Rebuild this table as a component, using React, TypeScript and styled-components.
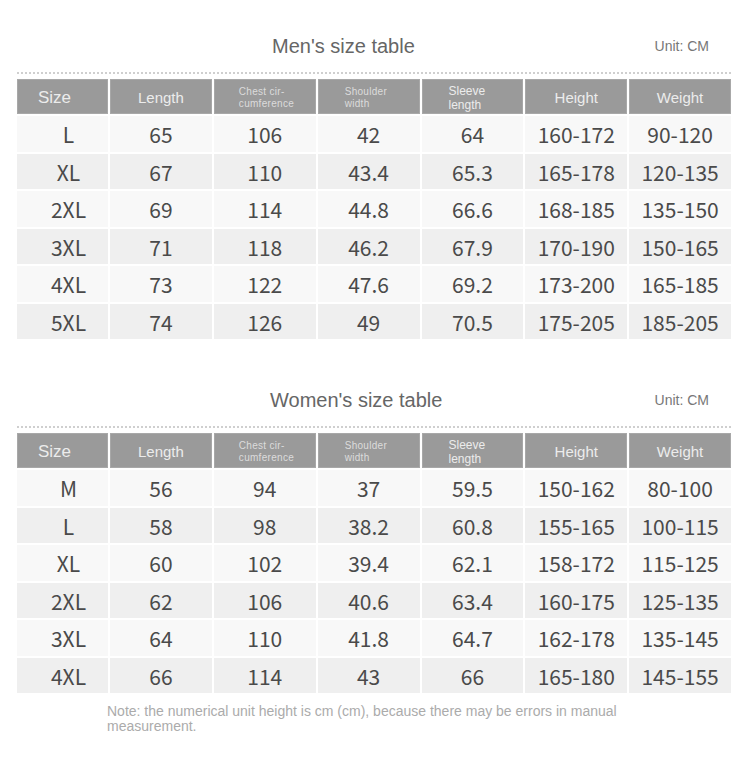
import styled, {createGlobalStyle} from "styled-components";

const GlobalStyle = createGlobalStyle`
    body {
        margin: 0;
        background: #ffffff;
        font-family: "Liberation Sans", Arial, sans-serif;
    }
`;

const Page = styled.div`
    width: 750px;
    padding-top: 26px;
    display: flex;
    flex-direction: column;
    gap: 41px;
`;

const Section = styled.section`
    display: flex;
    flex-direction: column;
    margin: 0 19px 0 17px;
`;

const TitleRow = styled.div`
    height: 40px;
    display: flex;
    align-items: center;
    padding: 0 22px 0 ${(props: { $indent: number }) => props.$indent}px;
`;

const Title = styled.h2`
    margin: 0;
    font-size: 20px;
    font-weight: normal;
    color: #666666;
`;

const Unit = styled.span`
    margin-left: auto;
    font-size: 14px;
    color: #777777;
`;

// the row of little dots right above the header
const Divider = styled.div`
    height: 0;
    border-top: 2px dotted #cfcfcf;
    margin: 6px 0 5px;
`;

const Grid = styled.div`
    display: grid;
    grid-template-columns: 91px repeat(6, 1fr);
    grid-template-rows: 35px;
    grid-auto-rows: 35.5px;
    gap: 2px;
    background: #ffffff;
`;

const HeadCell = styled.div<{ $small?: boolean; $pad?: number; $size?: number }>`
    background: #9a9a9a;
    box-shadow: inset 0 0 0 1px #a8a8a8;
    display: flex;
    flex-direction: column;
    justify-content: center;
    align-items: ${(props) => (props.$pad !== undefined ? "flex-start" : "center")};
    padding-left: ${(props) => props.$pad ?? 0}px;
    padding-top: 2px;
    color: ${(props) => (props.$small ? "#dcdcdc" : "#ececec")};
    font-size: ${(props) => props.$size ?? 15}px;
    line-height: ${(props) => (props.$size && props.$size < 14 ? `${props.$size + 2}px` : "normal")};
    letter-spacing: ${(props) => (props.$small ? "0.3px" : "0")};
`;

const Cell = styled.div<{ $odd: boolean; $first?: boolean }>`
    background: ${(props) => (props.$odd ? "#efefef" : "#f8f8f8")};
    display: flex;
    align-items: center;
    justify-content: center;
    padding-left: ${(props) => (props.$first ? "12px" : "0")};
    padding-top: 1px;
    font-family: "Noto Sans CJK SC", "Noto Sans", sans-serif;
    font-size: 21px;
    color: #4a4a4a;
`;

const Note = styled.p`
    margin: 11px 0 0 107px;
    width: 540px;
    font-size: 14px;
    line-height: 15px;
    color: #ababab;
`;

const menRows = [
    ["L", "65", "106", "42", "64", "160-172", "90-120"],
    ["XL", "67", "110", "43.4", "65.3", "165-178", "120-135"],
    ["2XL", "69", "114", "44.8", "66.6", "168-185", "135-150"],
    ["3XL", "71", "118", "46.2", "67.9", "170-190", "150-165"],
    ["4XL", "73", "122", "47.6", "69.2", "173-200", "165-185"],
    ["5XL", "74", "126", "49", "70.5", "175-205", "185-205"],
];

const womenRows = [
    ["M", "56", "94", "37", "59.5", "150-162", "80-100"],
    ["L", "58", "98", "38.2", "60.8", "155-165", "100-115"],
    ["XL", "60", "102", "39.4", "62.1", "158-172", "115-125"],
    ["2XL", "62", "106", "40.6", "63.4", "160-175", "125-135"],
    ["3XL", "64", "110", "41.8", "64.7", "162-178", "135-145"],
    ["4XL", "66", "114", "43", "66", "165-180", "145-155"],
];

function SizeTable({title, indent, rows}: { title: string; indent: number; rows: string[][] }) {
    return (
        <Section>
            <TitleRow $indent={indent}>
                <Title>{title}</Title>
                <Unit>Unit: CM</Unit>
            </TitleRow>
            <Divider/>
            <Grid>
                <HeadCell $pad={21} $size={17}>Size</HeadCell>
                <HeadCell>Length</HeadCell>
                <HeadCell $small $pad={25} $size={10}>
                    <span>Chest cir-</span>
                    <span>cumference</span>
                </HeadCell>
                <HeadCell $small $pad={27} $size={10}>
                    <span>Shoulder</span>
                    <span>width</span>
                </HeadCell>
                <HeadCell $pad={27} $size={12}>
                    <span>Sleeve</span>
                    <span>length</span>
                </HeadCell>
                <HeadCell>Height</HeadCell>
                <HeadCell>Weight</HeadCell>
                {rows.map((row, r) =>
                    row.map((value, c) => (
                        <Cell key={r + "-" + c} $odd={r % 2 === 1} $first={c === 0}>
                            {value}
                        </Cell>
                    ))
                )}
            </Grid>
        </Section>
    );
}

export default function App() {
    return (
        <>
            <GlobalStyle/>
            <Page>
                <SizeTable title="Men's size table" indent={255} rows={menRows}/>
                <div>
                    <SizeTable title="Women's size table" indent={253} rows={womenRows}/>
                    <Note>
                        Note: the numerical unit height is cm (cm), because there may be errors in manual measurement.
                    </Note>
                </div>
            </Page>
        </>
    );
}
